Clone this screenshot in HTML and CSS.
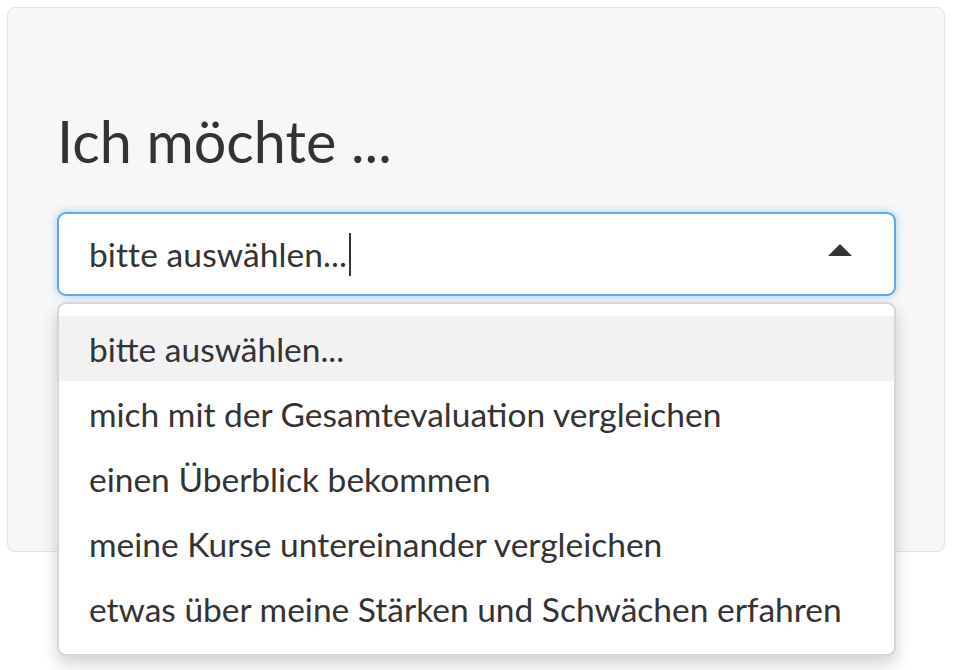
FILE: index.html
```html
<!DOCTYPE html>
<html lang="de">
<head>
<meta charset="utf-8">
<title>Ich möchte</title>
<link rel="stylesheet" href="styles.css">
</head>
<body>
<div class="well">
  <h3 class="title">Ich möchte ...</h3>
  <div class="select-wrap">
    <div class="select">
      <span class="select-value">bitte auswählen...</span><span class="cursor"></span>
      <span class="caret"></span>
    </div>
    <ul class="menu">
      <li class="option active">bitte auswählen...</li>
      <li class="option">mich mit der Gesamtevaluation vergleichen</li>
      <li class="option">einen Überblick bekommen</li>
      <li class="option">meine Kurse untereinander vergleichen</li>
      <li class="option">etwas über meine Stärken und Schwächen erfahren</li>
    </ul>
  </div>
</div>
</body>
</html>
```
FILE: styles.css
```css
html, body {
  margin: 0;
  background: #ffffff;
}
body {
  min-height: 670px;
  box-sizing: border-box;
  padding: 7px 10px 0 7px;
  font-family: Lato, "Open Sans", sans-serif;
  color: #333333;
}
.well {
  box-sizing: border-box;
  height: 545px;
  border: 1px solid #e3e3e3;
  border-radius: 8px;
  background: #f7f7f7;
  padding: 97px 48px 0 49px;
}
.title {
  margin: 0 0 35px 0;
  font-size: 57.5px;
  line-height: 72px;
  font-weight: 400;
  color: #333333;
}
.select-wrap {
  position: relative;
}
.select {
  height: 84px;
  box-sizing: border-box;
  border: 2px solid #5ea9e8;
  border-radius: 9px;
  background: #ffffff;
  box-shadow: 0 0 8px rgba(102, 175, 233, 0.6);
  display: flex;
  align-items: center;
  padding: 0 42px 0 30px;
  font-size: 33.5px;
}
.select-value {
  line-height: 40px;
  letter-spacing: 0.1px;
}
.cursor {
  display: inline-block;
  width: 2px;
  height: 43px;
  background: #333333;
  margin-left: 2px;
}
.caret {
  margin-left: auto;
  width: 0;
  height: 0;
  border-left: 12px solid transparent;
  border-right: 12px solid transparent;
  border-bottom: 12px solid #333333;
  margin-top: -8px;
}
.menu {
  position: absolute;
  left: 0;
  right: 0;
  top: 90px;
  margin: 0;
  padding: 12px 0 13px;
  list-style: none;
  background: #ffffff;
  border: 2px solid #d6d6d6;
  border-radius: 9px;
  box-shadow: 0 8px 16px rgba(0, 0, 0, 0.18);
}
.option {
  height: 65px;
  display: flex;
  align-items: center;
  padding: 0 30px;
  font-size: 33.5px;
  color: #333333;
}
.option.active {
  background: #f2f2f2;
}
```
